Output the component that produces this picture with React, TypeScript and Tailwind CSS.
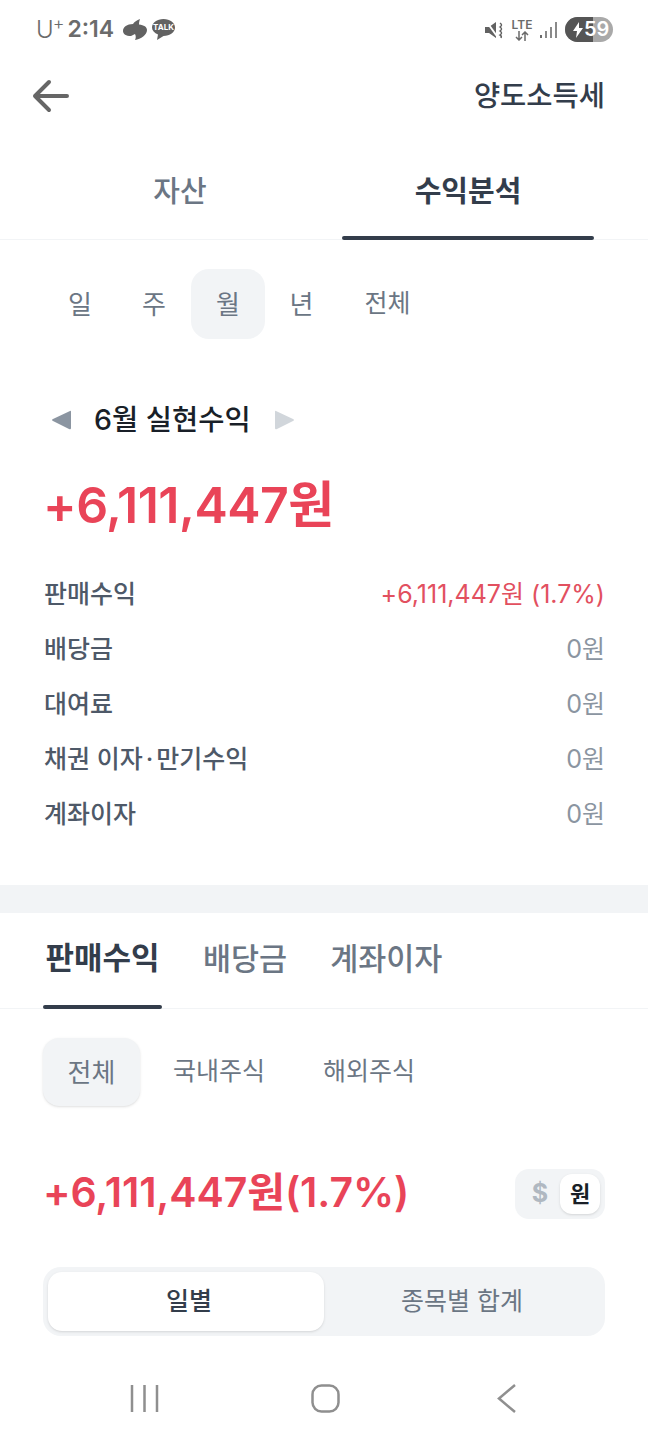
const font = { fontFamily: 'Inter, "Noto Sans CJK KR", sans-serif' };

const rows = [
  { label: <>채권 이자<span className="mx-[3px]">·</span>만기수익</>, key: 'bond', value: '0원' },
  { label: '계좌이자', key: 'account', value: '0원' },
];

function StatusBar() {
  return (
    <div className="h-[60px] flex items-center justify-between pl-[36px] pr-[35px] pb-[1px] text-[#6b6b6b]">
      <div className="flex items-center">
        <span className="text-[24px] font-light leading-none">U</span>
        <span className="text-[18px] font-light leading-none -mt-[11px] -ml-[1px]">+</span>
        <span className="text-[23px] font-semibold leading-none ml-[3px]">2:14</span>
        <svg width="24" height="22" viewBox="0 0 24 22" className="ml-[9px]">
          <path d="M17 0 C14 1 11 3 10 5 C4 5 0 8 0 12 C0 15 3 17 8 17 L12 15 C13 17 13 19 12 21 C18 20 24 16 24 11 C24 8 21 6 16 5.500 C16 3.500 16.500 1.500 17 0 Z" fill="#626262" />
        </svg>
        <svg width="23" height="21" viewBox="0 0 23 21" className="ml-[5px]">
          <path d="M11.500 0 C18 0 23 3.800 23 8.500 C23 13.200 18 17 11.500 17 L5 21 L6 15.500 C2.400 14 0 11.500 0 8.500 C0 3.800 5 0 11.500 0 Z" fill="#626262" />
          <text x="11.500" y="11" textAnchor="middle" fontSize="8" fontWeight="700" fill="#fff">TALK</text>
        </svg>
      </div>
      <div className="flex items-center">
        <svg width="20" height="22" viewBox="0 0 20 22">
          <path d="M1 8 H5 L12 3 V19 L5 14 H1 Z" fill="#626262" />
          <path d="M2 2 L15 20" stroke="#fff" strokeWidth="2" />
          <path d="M16 4 q3 2 0 4 q3 2 0 4 q3 2 0 4 q2 1 1 3" stroke="#626262" strokeWidth="1.500" fill="none" />
        </svg>
        <div className="ml-[8px] w-[20px] flex flex-col items-center">
          <span className="text-[12px] font-semibold leading-[12px]">LTE</span>
          <svg width="14" height="10" viewBox="0 0 14 10" fill="none" stroke="#6b6b6b" strokeWidth="1.500">
            <path d="M4 0 V9 M1 6 L4 9 L7 6 M10 10 V1 M7 4 L10 1 L13 4" />
          </svg>
        </div>
        <svg width="18" height="20" viewBox="0 0 18 20" className="ml-[7px]">
          <rect x="1" y="15" width="2" height="3" fill="#6b6b6b" />
          <rect x="6" y="11" width="2" height="7" fill="#8a8a8a" />
          <rect x="11" y="7" width="2" height="11" fill="#8a8a8a" />
          <rect x="16" y="2" width="2" height="16" fill="#8a8a8a" />
        </svg>
        <div className="ml-[8px] w-[48px] h-[25px] rounded-full overflow-hidden flex bg-[#a9a9a9] relative">
          <div className="w-[28px] h-full bg-[#555555]" />
          <svg width="12" height="16" viewBox="0 0 12 16" className="absolute left-[7px] top-[5px]">
            <path d="M7 0 L1 9 H5 L4 16 L11 6 H7 Z" fill="#fff" />
          </svg>
          <span className="absolute left-[19px] top-0 text-white text-[20px] font-semibold leading-[25px]">59</span>
        </div>
      </div>
    </div>
  );
}

function IncomeRow({ label, value }: { label: React.ReactNode; value: string }) {
  return (
    <div className="h-[55px] flex items-center justify-between">
      <span className="text-[#4e5968] font-medium">{label}</span>
      <span className="text-[#8b95a1]">{value}</span>
    </div>
  );
}

export default function App() {
  return (
    <div style={font} className="w-[648px] h-[1440px] bg-white overflow-hidden flex flex-col text-[#4e5968]">
      <StatusBar />

      <div className="h-[72px] flex items-center justify-between pl-[32px] pr-[43px]">
        <svg width="38" height="34" viewBox="0 0 38 34" fill="none" stroke="#666666" strokeWidth="4" strokeLinecap="round" strokeLinejoin="round">
          <path d="M3 17 H35 M17 3 L3 17 L17 31" />
        </svg>
        <span className="text-[28.500px] font-medium text-[#333d4b] leading-none">양도소득세</span>
      </div>

      <div className="h-[108px] flex border-b border-[#f2f4f6] px-[18px]">
        <div className="w-[324px] flex items-center justify-center text-[29px] font-medium text-[#6b7684] pt-[12px]">자산</div>
        <div className="w-[252px] relative flex items-center justify-center text-[29px] font-semibold text-[#333d4b] pt-[12px]">
          수익분석
          <span className="absolute left-0 right-0 -bottom-[1px] h-[4px] rounded-full bg-[#333d4b]" />
        </div>
      </div>

      <div className="mt-[29px] pl-[43px] flex items-center text-[26px] text-[#6b7684] h-[70px]">
        <div className="w-[74px] text-center">일</div>
        <div className="w-[74px] text-center">주</div>
        <div className="w-[74px] h-[70px] rounded-[18px] bg-[#f2f4f6] flex items-center justify-center">월</div>
        <div className="w-[73px] text-center">년</div>
        <div className="w-[99px] text-center text-[25px]">전체</div>
      </div>

      <div className="mt-[62px] h-[38px] pl-[51px] flex items-center">
        <svg width="21" height="22" viewBox="0 0 21 22">
          <path d="M19 2 Q20 1 20 3 V19 Q20 21 18 20 L2 12 Q0 11 2 10 Z" fill="#8b95a1" />
        </svg>
        <span className="ml-[22px] text-[28.500px] font-medium text-[#191f28] leading-none">6월 실현수익</span>
        <svg width="21" height="22" viewBox="0 0 21 22" className="ml-[23px]">
          <path d="M2 2 Q1 1 1 3 V19 Q1 21 3 20 L19 12 Q21 11 19 10 Z" fill="#d1d6db" />
        </svg>
      </div>

      <div className="mt-[35px] pl-[43px] text-[50px] font-semibold text-[#e94458] leading-[62px] tracking-[-0.5px]">+6,111,447원</div>

      <div className="mt-[31px] pl-[44px] pr-[43px] flex flex-col text-[25px]">
        <div className="h-[55px] flex items-center justify-between">
          <span className="text-[#4e5968] font-medium">판매수익</span>
          <span className="text-[#e2505f]">+6,111,447원 (1.7%)</span>
        </div>
        <IncomeRow label="배당금" value="0원" />
        <IncomeRow label="대여료" value="0원" />
        {rows.map(r => (
          <IncomeRow key={r.key} label={r.label} value={r.value} />
        ))}
      </div>

      <div className="mt-[43px] h-[28px] bg-[#f2f4f6]" />

      <div className="h-[96px] flex border-b border-[#f2f4f6] pl-[43px]">
        <div className="w-[119px] relative flex items-center justify-center text-[31px] font-semibold text-[#333d4b] pb-[4px]">
          판매수익
          <span className="absolute left-0 right-0 -bottom-[1px] h-[4px] rounded-full bg-[#333d4b]" />
        </div>
        <div className="ml-[41px] flex items-center text-[30.500px] text-[#6b7684] font-medium pb-[4px]">배당금</div>
        <div className="ml-[43px] flex items-center text-[30.500px] text-[#6b7684] font-medium pb-[4px]">계좌이자</div>
      </div>

      <div className="mt-[29px] pl-[43px] flex items-center text-[25px] text-[#6b7684] h-[68px]">
        <div className="w-[97px] h-[68px] rounded-[16px] bg-[#f2f4f6] shadow-sm flex items-center justify-center text-[26px] text-[#6b7684]">전체</div>
        <div className="ml-[33px]">국내주식</div>
        <div className="ml-[58px]">해외주식</div>
      </div>

      <div className="mt-[61px] pl-[43px] pr-[43px] flex items-start justify-between">
        <span className="text-[41px] font-semibold text-[#e94458] leading-[50px] tracking-[-0.1px]">+6,111,447원(1.7%)</span>
        <div className="mt-[2px] w-[90px] h-[50px] rounded-[14px] bg-[#f2f4f6] flex items-center p-[5px]">
          <span className="flex-1 text-center text-[25px] font-bold text-[#b0b8c1]">$</span>
          <span className="w-[40px] h-[40px] rounded-[12px] bg-white shadow-sm flex items-center justify-center text-[22px] font-bold text-[#191f28]">원</span>
        </div>
      </div>

      <div className="mt-[48px] mx-[43px] h-[69px] rounded-[18px] bg-[#f2f4f6] p-[5px] flex text-[25px]">
        <div className="w-[276px] rounded-[14px] bg-white shadow-sm flex items-center justify-center pl-[6px] font-medium text-[#333d4b]">일별</div>
        <div className="flex-1 flex items-center justify-center text-[#6b7684]">종목별 합계</div>
      </div>

      <div className="mt-[29px] flex items-center h-[60px]">
        <svg width="648" height="60" viewBox="0 0 648 60" fill="none" stroke="#8f8f8f">
          <path d="M132 20 V47 M144.500 20 V47 M157 20 V47" strokeWidth="2.500" />
          <rect x="312.500" y="20.500" width="26" height="26" rx="9" strokeWidth="2.500" />
          <path d="M515 20 L499 33.500 L515 47" strokeWidth="2.500" />
        </svg>
      </div>
    </div>
  );
}
